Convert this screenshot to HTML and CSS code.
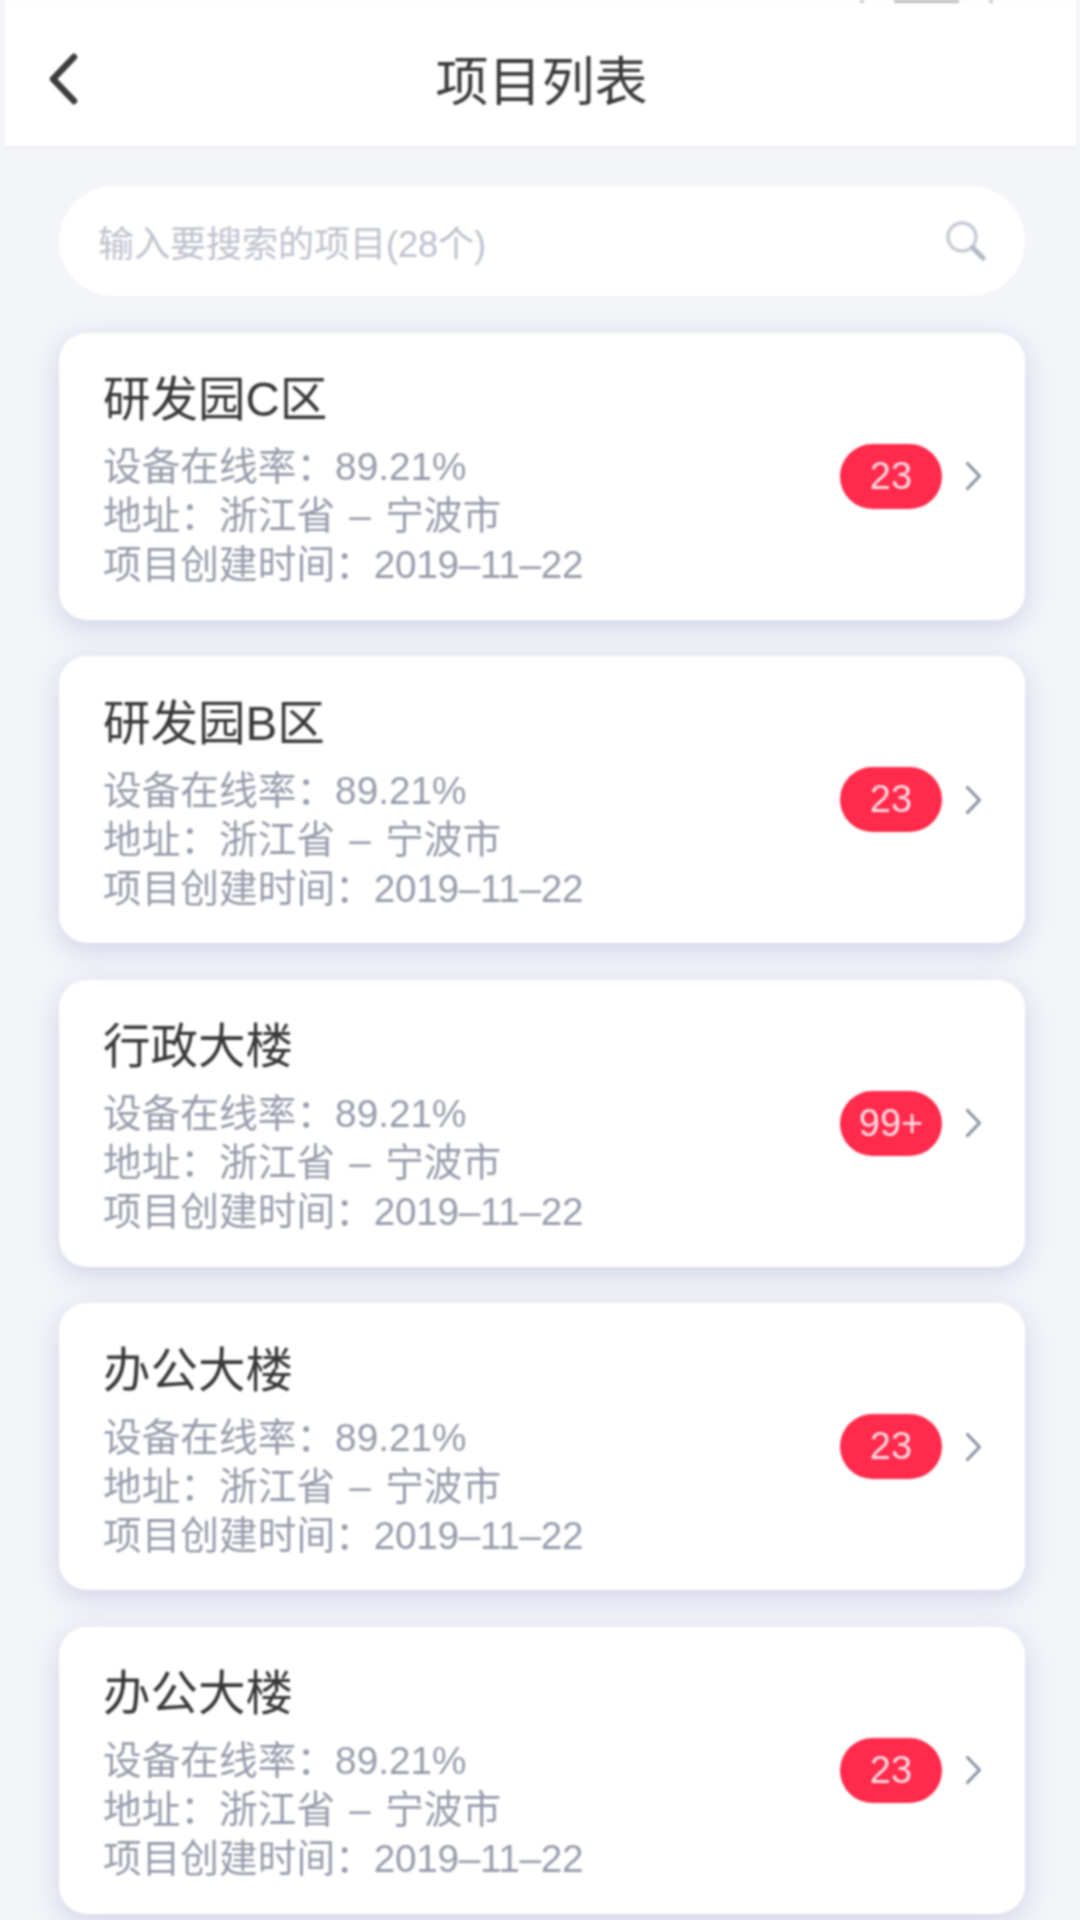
FILE: index.html
```html
<!DOCTYPE html>
<html lang="zh-CN">
<head>
    <meta charset="UTF-8">
    <meta name="viewport" content="width=device-width, initial-scale=1.0">
    <title>项目列表</title>
    <link rel="stylesheet" href="styles.css">
</head>
<body>
    <div class="page">
        <!-- Header -->
        <header class="header">
            <div class="status-edge">
                <span class="status-dot"></span>
                <span class="status-bar"></span>
                <span class="status-dot"></span>
            </div>
            <svg class="back-icon" width="32" height="52" viewBox="0 0 32 52">
                <path d="M27 4 L6 26 L27 48" fill="none" stroke="#3c3c3e" stroke-width="6.5" stroke-linecap="round" stroke-linejoin="round"/>
            </svg>
            <h1 class="header-title">项目列表</h1>
        </header>

        <main class="content">
            <!-- Search -->
            <div class="search">
                <span class="search-text">输入要搜索的项目(28个)</span>
                <svg class="search-icon" width="42" height="42" viewBox="0 0 42 42">
                    <circle cx="17" cy="17" r="14" fill="none" stroke="#c9ccd6" stroke-width="3.5"/>
                    <path d="M28 28 L38 38" fill="none" stroke="#b4b8c5" stroke-width="5" stroke-linecap="round"/>
                </svg>
            </div>

            <!-- Project list -->
            <section class="card">
                <div class="card-info">
                    <h2 class="card-title">研发园C区</h2>
                    <p class="card-line">设备在线率：89.21%</p>
                    <p class="card-line card-address">地址：浙江省 – 宁波市</p>
                    <p class="card-line">项目创建时间：<span class="card-date">2019–11–22</span></p>
                </div>
                <span class="badge">23</span>
                <svg class="arrow" width="17" height="30" viewBox="0 0 17 30">
                    <path d="M2.5 2.5 L14.5 15 L2.5 27.5" fill="none" stroke="#8f94a3" stroke-width="3.2" stroke-linecap="round" stroke-linejoin="round"/>
                </svg>
            </section>

            <section class="card">
                <div class="card-info">
                    <h2 class="card-title">研发园B区</h2>
                    <p class="card-line">设备在线率：89.21%</p>
                    <p class="card-line card-address">地址：浙江省 – 宁波市</p>
                    <p class="card-line">项目创建时间：<span class="card-date">2019–11–22</span></p>
                </div>
                <span class="badge">23</span>
                <svg class="arrow" width="17" height="30" viewBox="0 0 17 30">
                    <path d="M2.5 2.5 L14.5 15 L2.5 27.5" fill="none" stroke="#8f94a3" stroke-width="3.2" stroke-linecap="round" stroke-linejoin="round"/>
                </svg>
            </section>

            <section class="card">
                <div class="card-info">
                    <h2 class="card-title">行政大楼</h2>
                    <p class="card-line">设备在线率：89.21%</p>
                    <p class="card-line card-address">地址：浙江省 – 宁波市</p>
                    <p class="card-line">项目创建时间：<span class="card-date">2019–11–22</span></p>
                </div>
                <span class="badge">99+</span>
                <svg class="arrow" width="17" height="30" viewBox="0 0 17 30">
                    <path d="M2.5 2.5 L14.5 15 L2.5 27.5" fill="none" stroke="#8f94a3" stroke-width="3.2" stroke-linecap="round" stroke-linejoin="round"/>
                </svg>
            </section>

            <section class="card">
                <div class="card-info">
                    <h2 class="card-title">办公大楼</h2>
                    <p class="card-line">设备在线率：89.21%</p>
                    <p class="card-line card-address">地址：浙江省 – 宁波市</p>
                    <p class="card-line">项目创建时间：<span class="card-date">2019–11–22</span></p>
                </div>
                <span class="badge">23</span>
                <svg class="arrow" width="17" height="30" viewBox="0 0 17 30">
                    <path d="M2.5 2.5 L14.5 15 L2.5 27.5" fill="none" stroke="#8f94a3" stroke-width="3.2" stroke-linecap="round" stroke-linejoin="round"/>
                </svg>
            </section>

            <section class="card">
                <div class="card-info">
                    <h2 class="card-title">办公大楼</h2>
                    <p class="card-line">设备在线率：89.21%</p>
                    <p class="card-line card-address">地址：浙江省 – 宁波市</p>
                    <p class="card-line">项目创建时间：<span class="card-date">2019–11–22</span></p>
                </div>
                <span class="badge">23</span>
                <svg class="arrow" width="17" height="30" viewBox="0 0 17 30">
                    <path d="M2.5 2.5 L14.5 15 L2.5 27.5" fill="none" stroke="#8f94a3" stroke-width="3.2" stroke-linecap="round" stroke-linejoin="round"/>
                </svg>
            </section>
        </main>
    </div>
</body>
</html>
```

FILE: styles.css
```css
* {
    margin: 0;
    padding: 0;
    box-sizing: border-box;
}

html, body {
    height: 100%;
    overflow: hidden;
    background: #f4f5f9;
}

body {
    font-family: "Liberation Sans", "Noto Sans CJK SC", sans-serif;
    color: #333;
}

.page {
    height: 1920px;
    filter: blur(0.8px);
}

.header {
    position: relative;
    display: flex;
    align-items: center;
    justify-content: center;
    height: 149px;
    margin: 0 4px 0 5px;
    padding: 19px 0 0 2px;
    background: #fff;
    border-bottom: 3px solid #eef0f2;
}

/* sliver of the status bar cut off at the top edge */
.status-edge {
    position: absolute;
    top: 0;
    left: 855px;
    display: flex;
    align-items: flex-start;
    gap: 30px;
}

.status-dot {
    width: 4px;
    height: 3px;
    background: #c6c6c6;
}

.status-bar {
    width: 65px;
    height: 3px;
    background: #bdbdbd;
}

.back-icon {
    position: absolute;
    left: 42px;
    top: 53px;
}

.header-title {
    font-size: 53px;
    font-weight: 400;
    line-height: 70px;
    color: #3a3a3c;
}

.content {
    display: flex;
    flex-direction: column;
    gap: 36.5px;
    padding: 37px 55px 0 59px;
}

.search {
    display: flex;
    align-items: center;
    justify-content: space-between;
    height: 110px;
    padding: 0 38px 0 39px;
    background: #fff;
    border-radius: 55px;
}

.search-text {
    font-size: 36px;
    color: #bfc2ce;
}

.card {
    display: flex;
    align-items: center;
    flex-shrink: 0;
    height: 287px;
    padding: 0 43px 0 44px;
    background: #fff;
    border-radius: 28px;
    box-shadow: 0 7px 26px rgba(170, 178, 214, 0.5);
}

.card-info {
    flex: 1;
    padding-top: 7px;
}

.card-title {
    font-size: 47.5px;
    font-weight: 400;
    line-height: 60px;
    margin-bottom: 12px;
    color: #38383a;
}

.card-line {
    font-size: 38.7px;
    line-height: 49px;
    color: #989cab;
}

.card-address {
    word-spacing: 3.5px;
}

.card-date {
    letter-spacing: -0.3px;
}

.badge {
    display: flex;
    align-items: center;
    justify-content: center;
    width: 102px;
    height: 65px;
    margin-right: 23px;
    border-radius: 33px;
    background: #ff2a4c;
    color: #ffdce2;
    font-size: 38px;
}
```
